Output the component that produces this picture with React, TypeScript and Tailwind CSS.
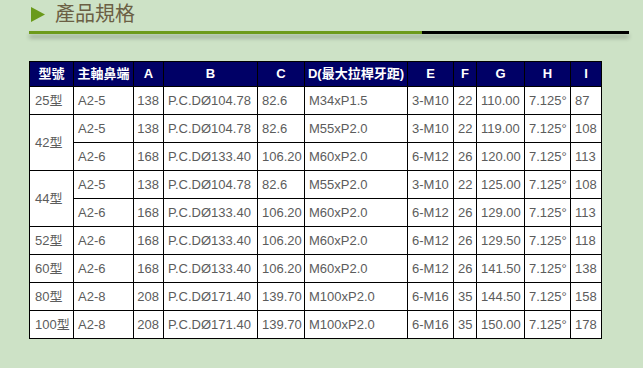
import React from 'react';

type Row = {
  model?: string;
  span?: number;
  cells: string[];
};

const headers = ['型號', '主軸鼻端', 'A', 'B', 'C', 'D(最大拉桿牙距)', 'E', 'F', 'G', 'H', 'I'];

const rows: Row[] = [
  { model: '25型', cells: ['A2-5', '138', 'P.C.DØ104.78', '82.6', 'M34xP1.5', '3-M10', '22', '110.00', '7.125°', '87'] },
  { model: '42型', span: 2, cells: ['A2-5', '138', 'P.C.DØ104.78', '82.6', 'M55xP2.0', '3-M10', '22', '119.00', '7.125°', '108'] },
  { cells: ['A2-6', '168', 'P.C.DØ133.40', '106.20', 'M60xP2.0', '6-M12', '26', '120.00', '7.125°', '113'] },
  { model: '44型', span: 2, cells: ['A2-5', '138', 'P.C.DØ104.78', '82.6', 'M55xP2.0', '3-M10', '22', '125.00', '7.125°', '108'] },
  { cells: ['A2-6', '168', 'P.C.DØ133.40', '106.20', 'M60xP2.0', '6-M12', '26', '129.00', '7.125°', '113'] },
  { model: '52型', cells: ['A2-6', '168', 'P.C.DØ133.40', '106.20', 'M60xP2.0', '6-M12', '26', '129.50', '7.125°', '118'] },
  { model: '60型', cells: ['A2-6', '168', 'P.C.DØ133.40', '106.20', 'M60xP2.0', '6-M12', '26', '141.50', '7.125°', '138'] },
  { model: '80型', cells: ['A2-8', '208', 'P.C.DØ171.40', '139.70', 'M100xP2.0', '6-M16', '35', '144.50', '7.125°', '158'] },
  { model: '100型', cells: ['A2-8', '208', 'P.C.DØ171.40', '139.70', 'M100xP2.0', '6-M16', '35', '150.00', '7.125°', '178'] },
];

export default function App() {
  return (
    <div
      className="min-h-screen bg-[#cde2c6] pt-[4px]"
      style={{ fontFamily: '"Liberation Sans", Arial, "Noto Sans CJK TC", sans-serif' }}
    >
      <div className="ml-[29px] w-[600px]">
        {/* title */}
        <div className="flex items-center h-[20px]">
          <svg width="14" height="15" viewBox="0 0 14 15" className="ml-[2px]">
            <polygon points="0,0 14,7.5 0,15" fill="#6a9a1a" />
          </svg>
          <span className="ml-[10px] text-[20px] leading-[20px] text-[#6b5f44]">產品規格</span>
        </div>

        <div className="mt-[7px] flex h-[3px] shadow-[0_4px_4px_rgba(0,0,0,0.28)]">
          <div className="w-[393px] bg-[#6d9b1b]" />
          <div className="flex-1 bg-black" />
        </div>

        {/* spec table */}
        <div className="mt-[27px] grid w-fit grid-cols-[44px_60px_30px_94px_47px_103px_46px_23px_48px_46px_31px] grid-rows-[25px_repeat(9,28px)] border-l border-t border-black">
          {headers.map((h) => (
            <div
              key={h}
              className="flex items-center justify-center border-b border-r border-black bg-[#000066] text-[13px] font-bold whitespace-nowrap text-white"
            >
              {h}
            </div>
          ))}
          {rows.map((r, i) => (
            <React.Fragment key={i}>
              {r.model && (
                <div
                  className={`flex items-center border-b border-r border-black bg-white pl-[5px] text-[13px] text-[#5c5c5c] ${r.span === 2 ? 'row-span-2' : ''}`}
                >
                  {r.model}
                </div>
              )}
              {r.cells.map((c, j) => (
                <div
                  key={j}
                  className={`flex items-center border-b border-r border-black bg-white text-[13px] whitespace-nowrap text-[#5c5c5c] ${j === 1 ? 'justify-end pr-[4px]' : 'pl-[4px]'}`}
                >
                  {c}
                </div>
              ))}
            </React.Fragment>
          ))}
        </div>
      </div>
    </div>
  );
}
